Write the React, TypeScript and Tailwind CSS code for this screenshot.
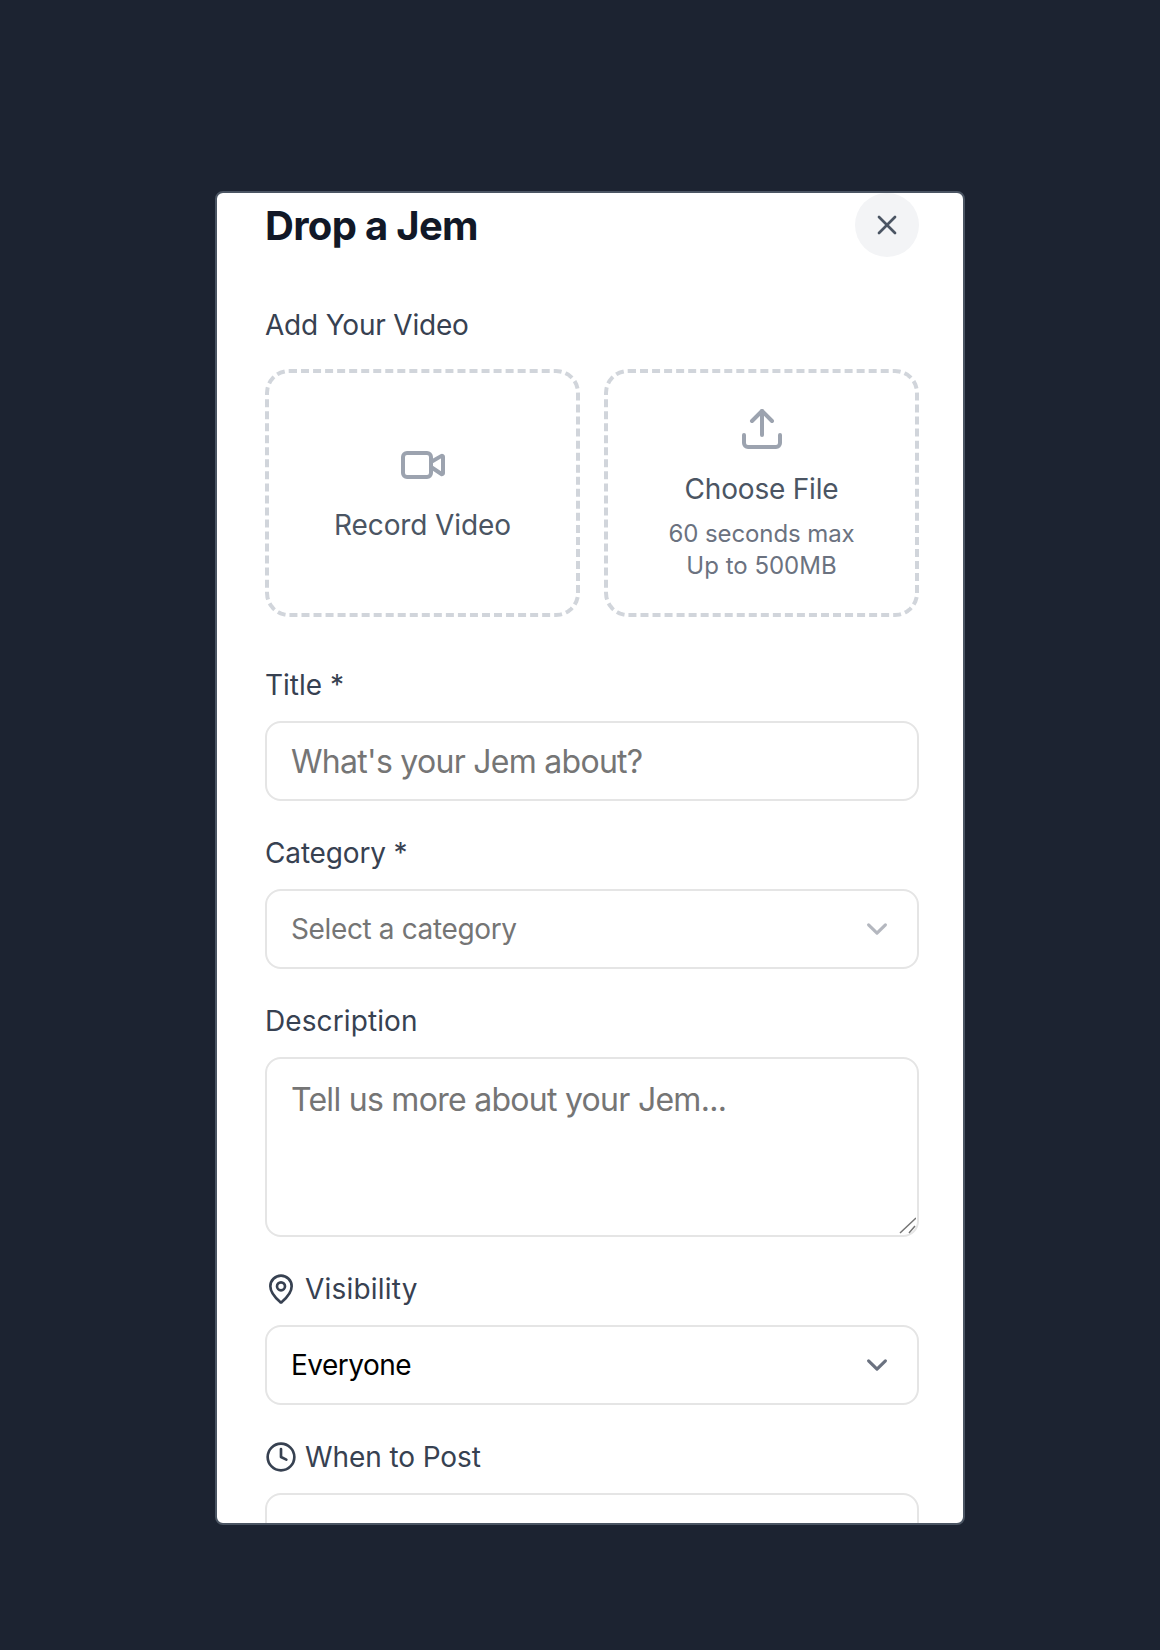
import type { ReactNode } from "react";
import { Clock, MapPin, Upload, Video, X } from "lucide-react";

const fieldClass =
  "w-full h-20 rounded-2xl border-2 border-[#e5e5e5] bg-white px-6 outline-none appearance-none";

function Chevron({ light }: { light?: boolean }) {
  return (
    <svg
      viewBox="0 0 20 20"
      fill="none"
      className={`absolute right-[21px] top-[19px] h-[42px] w-[42px] pointer-events-none ${light ? "opacity-50" : ""}`}
    >
      <path d="M6 8l4 4 4-4" stroke="#6b7280" strokeWidth="1.5" strokeLinecap="round" strokeLinejoin="round" />
    </svg>
  );
}

function Field({
  label,
  icon,
  tracking = "",
  children,
}: {
  label: string;
  icon?: ReactNode;
  tracking?: string;
  children: ReactNode;
}) {
  return (
    <div className="mb-8">
      <label className={`mb-4 flex h-10 items-center gap-2 text-[28px] leading-10 text-[#374151] ${tracking}`}>
        {icon}
        <span>{label}</span>
      </label>
      {children}
    </div>
  );
}

export default function App() {
  return (
    <div
      className="h-[1650px] bg-[#1c2331] pl-[215px] pt-[191px]"
      style={{ fontFamily: "Inter, sans-serif" }}
    >
      <div className="h-[1334px] w-[750px] overflow-hidden rounded-lg border-2 border-[#4b5563] bg-white pl-[48px] pr-[44px]">
        {/* Header */}
        <div className="mb-12 flex items-center justify-between">
          <h2 className="pt-[2px] text-[40px] leading-[56px] font-bold tracking-[-0.7px] text-[#111827]">Drop a Jem</h2>
          <button className="flex h-16 w-16 items-center justify-center rounded-full bg-[#f3f4f6] text-[#4b5563]">
            <X size={32} />
          </button>
        </div>

        {/* Video */}
        <div className="mb-12">
          <p className="mb-6 h-10 text-[28px] leading-10 tracking-[-0.2px] text-[#374151]">Add Your Video</p>
          <div className="grid grid-cols-2 gap-6">
            <button className="flex h-[248px] flex-col items-center justify-center rounded-3xl border-4 border-dashed border-[#d1d5db]">
              <Video size={48} className="mb-4 text-[#9ca3af]" />
              <span className="text-[28px] leading-10 tracking-[-0.1px] text-[#4b5563]">Record Video</span>
            </button>
            <button className="flex h-[248px] flex-col items-center justify-center rounded-3xl border-4 border-dashed border-[#d1d5db] pt-px">
              <Upload size={48} className="mb-4 text-[#9ca3af]" />
              <span className="text-[28px] leading-10 tracking-[-0.2px] text-[#4b5563]">Choose File</span>
              <span className="mt-[9px] text-2xl leading-8 tracking-[-0.1px] text-[#6b7280]">60 seconds max</span>
              <span className="text-2xl leading-8 text-[#6b7280]">Up to 500MB</span>
            </button>
          </div>
        </div>

        <Field label="Title *">
          <input
            type="text"
            placeholder="What's your Jem about?"
            className={`${fieldClass} pt-px text-[32px] tracking-[-0.72px] placeholder:text-[#757575]`}
          />
        </Field>

        <Field label="Category *" tracking="tracking-[-0.15px]">
          <div className="relative">
            <select defaultValue="" className={`${fieldClass} text-[28px] tracking-[-0.37px] text-[#757575]`}>
              <option value="">Select a category</option>
            </select>
            <Chevron light />
          </div>
        </Field>

        <Field label="Description" tracking="tracking-[0.1px]">
          <div className="relative">
            <textarea
              placeholder="Tell us more about your Jem..."
              className="block h-[180px] w-full resize-none rounded-2xl border-2 border-[#e5e5e5] bg-white px-6 pt-[17px] pb-4 text-[32px] tracking-[-0.72px] outline-none placeholder:text-[#757575]"
            />
            {/* resize grip */}
            <svg viewBox="0 0 18 18" className="absolute right-[3px] bottom-[3px] h-[18px] w-[18px] pointer-events-none">
              <path d="M2 17 18 2M11 17l6-7" stroke="#757575" strokeWidth="1.5" fill="none" />
            </svg>
          </div>
        </Field>

        <Field label="Visibility" tracking="tracking-[0.2px]" icon={<MapPin size={32} />}>
          <div className="relative">
            <select defaultValue="everyone" className={`${fieldClass} text-[28px] tracking-[-0.5px] text-black`}>
              <option value="everyone">Everyone</option>
            </select>
            <Chevron />
          </div>
        </Field>

        <Field label="When to Post" tracking="tracking-[-0.1px]" icon={<Clock size={32} />}>
          <div className={fieldClass} />
        </Field>
      </div>
    </div>
  );
}
